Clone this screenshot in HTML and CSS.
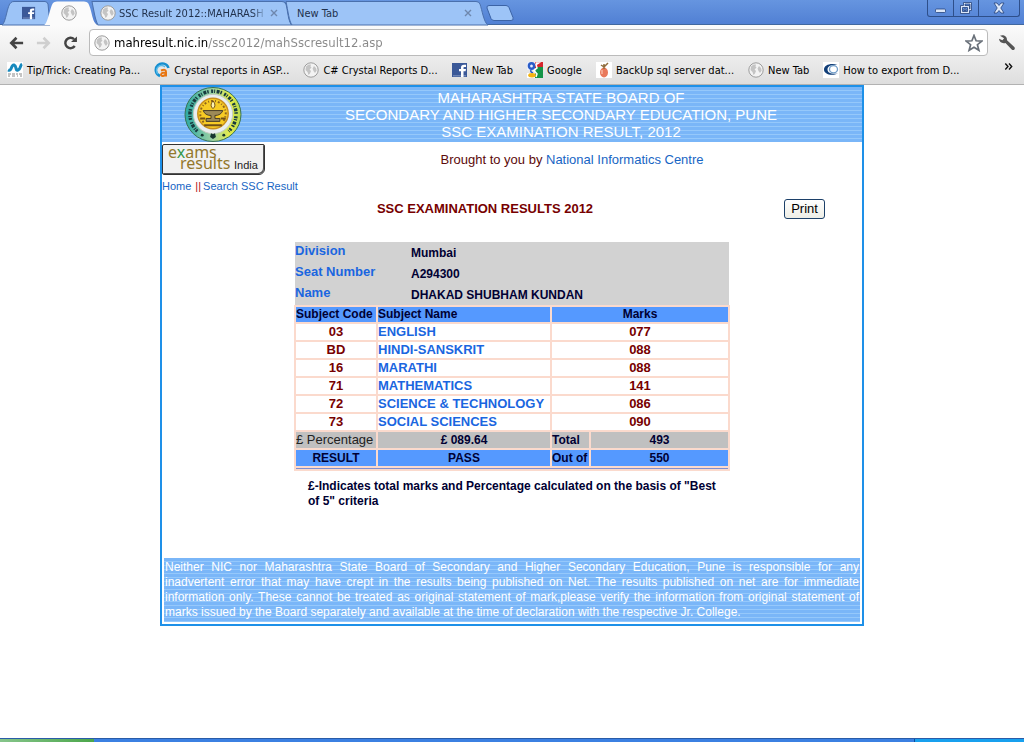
FILE: index.html
```html
<!DOCTYPE html>
<html lang="en">
<head>
<meta charset="utf-8">
<title>SSC Result 2012</title>
<link rel="stylesheet" href="styles.css">
</head>
<body>
<svg class="sprite" aria-hidden="true">
  <symbol id="globe" viewBox="0 0 16 16"><circle cx="8" cy="8" r="7.2" fill="#f3f3f3" stroke="#9c9c9c" stroke-width="1"/><path d="M3 4.500 5.500 2.500l2.500 0-.5 2 1 1L6.600 7.500 8 9l-1 2.500-1.500 1.500-1-3-2-2zM11 4l2 2 .7 2.500-1.700 2.400-1.500-2-.9-2.500z" fill="#c4c4c4"/></symbol>
  <symbol id="fb" viewBox="0 0 16 16"><path d="M0 1h15v14H0z" fill="#3b5998"/><path d="M1 13h13v1.5H1z" fill="#6d84b4"/><path d="M9 15V9.200H7V7h2V5.500C9 3.600 10 2.800 12 2.800h2V5h-1.300c-1 0-1.200.3-1.200 1V7H14l-.4 2.200h-2.100V15z" fill="#fff"/></symbol>
</svg>

<header class="browser">
  <div class="tabstrip">
    <div class="tabs">
      <button class="tab tab-pinned" type="button" aria-label="Facebook">
        <svg class="tab-shape" viewBox="0 0 48 24" preserveAspectRatio="none"><path d="M0 24C4 22 5 4 9 1.500Q10 .5 12 .5H43Q45 .5 46 3L48 24z"/></svg>
        <svg class="icon"><use href="#fb"/></svg>
      </button>
      <button class="tab tab-active" type="button" aria-label="Current page">
        <svg class="tab-shape" viewBox="0 0 54 24" preserveAspectRatio="none"><path d="M0 24C4 23 6 6 9 2Q10 .5 13 .5H40Q43 .5 44 2C48 8 48 23 54 24z"/></svg>
        <svg class="icon"><use href="#globe"/></svg>
      </button>
      <button class="tab tab-result" type="button">
        <svg class="tab-shape" viewBox="0 0 198 24" preserveAspectRatio="none"><path d="M6 24C3 20 2 10 0 .5H188Q191 .5 192 3C194 9 194 22 198 24z"/></svg>
        <svg class="icon"><use href="#globe"/></svg><span class="tab-label fade">SSC Result 2012::MAHARASH</span><svg class="close" viewBox="0 0 8 8"><path d="m1 1 6 6M7 1 1 7"/></svg>
      </button>
      <button class="tab tab-new" type="button">
        <svg class="tab-shape" viewBox="0 0 202 24" preserveAspectRatio="none"><path d="M6 24C3 20 2 10 0 .5H190Q193 .5 194 3C196 9 198 22 202 24z"/></svg>
        <span class="tab-label">New Tab</span><svg class="close" viewBox="0 0 8 8"><path d="m1 1 6 6M7 1 1 7"/></svg>
      </button>
      <button class="add-tab" type="button" aria-label="Open a new tab"><svg viewBox="0 0 28 16"><path d="M3 .5h17q2 0 3 2l4 10q1 3-2 3H8q-2 0-3-2L1 3Q.5.500 3 .5z"/></svg></button>
    </div>
    <div class="window-buttons">
      <button type="button" aria-label="Minimise"><svg viewBox="0 0 14 14"><rect x="1.500" y="8" width="10" height="3.500" rx="1"/></svg></button>
      <button type="button" aria-label="Restore"><svg viewBox="0 0 14 14"><path fill-rule="evenodd" d="M4.500 1.500h8v8h-2v3h-9v-8h3zM6 3v1.500h4.500V8H11V3zM3.500 6.500v4h5v-4zM5 8h2v1.500H5z"/></svg></button>
      <button class="window-close" type="button" aria-label="Close"><svg viewBox="0 0 14 14"><path d="M2 2h3l2 2.500L9 2h3L8.800 7l3.200 5H9L7 9.500 5 12H2l3.200-5z"/></svg></button>
    </div>
  </div>

  <div class="toolbar">
    <button type="button" aria-label="Back"><svg viewBox="0 0 18 18"><path d="M16 9H4M9 3.500 3.500 9 9 14.500" fill="none" stroke="#444" stroke-width="2.800"/></svg></button>
    <button type="button" aria-label="Forward"><svg viewBox="0 0 18 18"><path d="M2 9h12M9 3.500 14.500 9 9 14.500" fill="none" stroke="#cfcfcf" stroke-width="2.800"/></svg></button>
    <button type="button" aria-label="Reload"><svg viewBox="0 0 18 18"><path d="M13.500 12.200A5.500 5.500 0 1 1 12.800 5" fill="none" stroke="#444" stroke-width="2.600"/><path d="M15.800 2v6H9.500z" fill="#444"/></svg></button>
    <div class="omnibox">
      <svg class="icon"><use href="#globe"/></svg>
      <input class="url" type="text" aria-label="Address" value="mahresult.nic.in/ssc2012/mahSscresult12.asp">
      <button type="button" aria-label="Bookmark this page"><svg viewBox="0 0 18 18"><path d="m9 1.500 2.100 5.300 5.700.3-4.400 3.600 1.500 5.600L9 13.200l-4.900 3.100 1.500-5.600L1.200 7.100l5.700-.3z" fill="#fff" stroke="#697079" stroke-width="1.700"/></svg></button>
    </div>
    <button class="wrench" type="button" aria-label="Settings"><svg viewBox="0 0 18 18"><path d="M2 1.800C5 .3 9.300 2 9 6.300l7.300 6.600c1.600 2-.8 4.200-2.600 2.700L7.500 9C4 9.900 1.200 8 1 4.800l3.400 1.500 1.700-2z" fill="#555"/></svg></button>
  </div>

  <nav class="bookmarks">
    <a href="#"><svg class="icon" viewBox="0 0 16 16"><path d="M0 0h16v16H0z" fill="#fff"/><path d="M1 8c4 2 3-6 6-5s1 6 4 5 2-5 4-6" fill="none" stroke="#1689bd" stroke-width="3"/><path d="M1 12h3m1 0h3m1 0h2m1 0h3M1 14h2m2 0h3m2 0h1m2 0h2" stroke="#888"/></svg>Tip/Trick: Creating Pa...</a>
    <a href="#"><svg class="icon" viewBox="0 0 16 16"><path d="M6 14A6.500 6.500 0 1 1 14.500 6" fill="none" stroke="#168fd0" stroke-width="2.500"/><path d="M4 12a4.500 4.500 0 0 1 7-7" fill="none" stroke="#57b9e8" stroke-width="1.500"/><path d="M7 8.500q5-2 5 1.500v4.500M12 10.500c-6-.5-6 4-3 3.500q3-.5 3-3" fill="none" stroke="#e87510" stroke-width="2"/></svg>Crystal reports in ASP...</a>
    <a href="#"><svg class="icon"><use href="#globe"/></svg>C# Crystal Reports D...</a>
    <a href="#"><svg class="icon"><use href="#fb"/></svg>New Tab</a>
    <a href="#"><svg class="icon" viewBox="0 0 16 16"><path d="M0 0h8v8H0z" fill="#e9eefb"/><path d="M8 0h8v6H8z" fill="#d6252b"/><path d="M9 5h7v11H7z" fill="#149447"/><path d="M0 11h8v5H0z" fill="#fff"/><ellipse cx="4.500" cy="4" rx="2.600" ry="2.800" fill="none" stroke="#2a5cc8" stroke-width="2.400"/><path d="M8.500 1h3L9 2.500 10 6 7 8.500 10 12 9 15" fill="none" stroke="#fff" stroke-width="1.500"/><path d="M4 8q-1 2 2 3" fill="none" stroke="#2a5cc8" stroke-width="1.500"/><ellipse cx="5" cy="13.300" rx="3.800" ry="2.200" fill="#f4b414"/></svg>Google</a>
    <a href="#"><svg class="icon" viewBox="0 0 16 16"><path d="M0 0h16v16H0z" fill="#fff"/><ellipse cx="8" cy="10.500" rx="4" ry="5" fill="#e9795b"/><path d="M8 7V2m0 3 4-4M8 5 5 3" fill="none" stroke="#8f6b3b" stroke-width="1.500"/><path d="M6 8v4" stroke="#f6b7a0" stroke-width="1.500"/></svg>BackUp sql server dat...</a>
    <a href="#"><svg class="icon"><use href="#globe"/></svg>New Tab</a>
    <a href="#"><svg class="icon" viewBox="0 0 16 16"><path d="M0 0h16v16H0z" fill="#fff"/><path d="M14.500 3C8 .5 1 3 1 7.500S8 14.500 15 11.500C10 12.500 4.500 11.500 4.500 7.500S9 2.500 14.500 3z" fill="#123f78"/><ellipse cx="10.500" cy="7.300" rx="4" ry="3.600" fill="none" stroke="#6f9cc8" stroke-width="1.300"/></svg>How to export from D...</a>
    <button class="more" type="button" aria-label="More bookmarks"><svg viewBox="0 0 8 7"><path d="m.8.500 2.700 3-2.700 3m3.700-6 2.700 3-2.700 3" fill="none" stroke="#111" stroke-width="1.400"/></svg></button>
  </nav>
</header>

<main class="viewport">
  <div class="sheet">
    <div class="banner stripes">
      <svg class="seal" viewBox="0 0 58 56" role="img" aria-label="Board emblem">
        <defs><linearGradient id="ring"><stop offset="0" stop-color="#2ba8a4"/><stop offset=".5" stop-color="#9fd3a4"/><stop offset=".8" stop-color="#e6ec48"/><stop offset="1" stop-color="#b4d850"/></linearGradient></defs>
        <ellipse cx="29" cy="28" rx="28.500" ry="27.500" fill="url(#ring)" stroke="#38704f"/>
        <path d="M13 45A23.500 23.500 0 1 1 45 45" fill="none" stroke="#183b40" stroke-width="3.500" stroke-dasharray="2 1 1 1.500 3 1 1.500 2.500"/>
        <circle cx="29" cy="27.500" r="20" fill="#e9eef0" stroke="#c3cdc0"/>
        <circle cx="29" cy="27" r="15.500" fill="#f7cb24" stroke="#c98f1c" stroke-width="1.500"/>
        <path d="M19.500 36A13 13 0 1 1 38.500 36" fill="none" stroke="#8c631c" stroke-dasharray="2 2 1 2" stroke-width="2"/>
        <path d="M29 14q4 5 0 8-4-3 0-8z" fill="#fff3b0" stroke="#70501b"/>
        <path d="M19 24h20q-2 5-8 5v3h5v3H22v-3h5v-3q-6 0-8-5z" fill="#9c8a58" stroke="#443b28"/>
        <path d="M16 32h5m16 0h5M20 39h18" stroke="#705018" stroke-width="2"/>
        <path d="m26 51 1-4 2 1 2-1 1 4-3 2z" fill="#17352f"/><circle cx="18" cy="49" r="1.500" fill="#17352f"/><circle cx="40" cy="49" r="1.500" fill="#17352f"/>
      </svg>
      <h1>MAHARASHTRA STATE BOARD OF<br>SECONDARY AND HIGHER SECONDARY EDUCATION, PUNE<br>SSC EXAMINATION RESULT, 2012</h1>
    </div>
    <div class="credit">
      <a class="logo" href="#"><span class="logo-mark"><span class="logo-exams">e<i>x</i>ams</span><span class="logo-results">results</span></span><span class="logo-india">India</span></a>
      <p>Brought to you by <a href="#">National Informatics Centre</a></p>
    </div>
    <nav class="crumbs"><a href="#">Home</a><span>||</span><a href="#">Search SSC Result</a></nav>
    <div class="heading">
      <h2>SSC EXAMINATION RESULTS 2012</h2>
      <button class="print" type="button">Print</button>
    </div>

    <section class="result">
      <dl class="candidate">
        <dt>Division</dt><dd>Mumbai</dd>
        <dt>Seat Number</dt><dd>A294300</dd>
        <dt>Name</dt><dd>DHAKAD SHUBHAM KUNDAN</dd>
      </dl>
      <table class="marks">
        <colgroup><col class="col-code"><col class="col-subject"><col class="col-label"><col></colgroup>
        <thead><tr><th scope="col">Subject Code</th><th scope="col">Subject Name</th><th scope="col" class="center" colspan="2">Marks</th></tr></thead>
        <tbody>
          <tr><td>03</td><td class="subject">ENGLISH</td><td colspan="2">077</td></tr>
          <tr><td>BD</td><td class="subject">HINDI-SANSKRIT</td><td colspan="2">088</td></tr>
          <tr><td>16</td><td class="subject">MARATHI</td><td colspan="2">088</td></tr>
          <tr><td>71</td><td class="subject">MATHEMATICS</td><td colspan="2">141</td></tr>
          <tr><td>72</td><td class="subject">SCIENCE &amp; TECHNOLOGY</td><td colspan="2">086</td></tr>
          <tr><td>73</td><td class="subject">SOCIAL SCIENCES</td><td colspan="2">090</td></tr>
        </tbody>
        <tfoot>
          <tr class="total"><td class="percentage">£ Percentage</td><td>£ 089.64</td><td class="left">Total</td><td>493</td></tr>
          <tr class="outcome"><td>RESULT</td><td>PASS</td><td class="left">Out of</td><td>550</td></tr>
          <tr class="rule"><td colspan="4"></td></tr>
        </tfoot>
      </table>
      <p class="note">£-Indicates total marks and Percentage calculated on the basis of "Best of 5" criteria</p>
    </section>

    <footer class="disclaimer stripes">
      <span>Neither NIC nor Maharashtra State Board of Secondary and Higher Secondary Education, Pune is responsible for any</span>
      <span>inadvertent error that may have crept in the results being published on Net. The results published on net are for immediate</span>
      <span>information only. These cannot be treated as original statement of mark,please verify the information from original statement of</span>
      <span>marks issued by the Board separately and available at the time of declaration with the respective Jr. College.</span>
    </footer>
  </div>
</main>
<div class="taskbar"><span class="start"></span><span class="tasks"></span><span class="tray"></span></div>
</body>
</html>
```

FILE: styles.css
```css
* { box-sizing: border-box; }
body { margin: 0; min-height: 100vh; display: flex; flex-direction: column; background: #fff; font-family: "Liberation Sans", Arial, sans-serif; }
h1, h2, p, dl, dd { margin: 0; }
a { color: #1765c4; text-decoration: none; }
button { margin: 0; padding: 0; border: 0; background: none; font: inherit; }
svg { display: block; flex: none; }
.sprite { position: absolute; width: 0; height: 0; }
.icon { width: 16px; height: 16px; }

/* Browser chrome */
.browser { font-family: "DejaVu Sans Condensed", "Noto Sans", sans-serif; font-size: 11px; color: #000; }
.tabstrip { display: flex; justify-content: space-between; height: 25px; background: linear-gradient(#6695e0, #5180d4); border-bottom: 1px solid #41689f; }
.tabs { display: flex; padding: 1px 0 0 2px; height: 25px; }
.tab { position: relative; isolation: isolate; display: flex; align-items: center; height: 24px; margin-right: -6px; color: #22324d; }
.tab-shape { position: absolute; inset: 0; width: 100%; height: 100%; z-index: -1; fill: #9dc4f7; stroke: #4a70ad; overflow: visible; }
.tab-pinned { width: 48px; padding-left: 20px; }
.tab-pinned .icon { width: 14px; height: 14px; }
.tab-active { width: 54px; padding-left: 17px; z-index: 1; }
.tab-active .tab-shape { fill: #fbfbfb; stroke: none; }
.tab-result { width: 200px; padding: 0 14px 0 8px; gap: 3px; }
.tab-new { width: 202px; padding: 0 16px 0 11px; }
.tab-label { flex: 1; min-width: 0; overflow: hidden; white-space: nowrap; text-align: left; }
.fade { mask-image: linear-gradient(to right, #000 90%, transparent); }
.close { width: 8px; height: 8px; fill: none; stroke: #6e87ad; stroke-width: 1.4; }
.add-tab { margin-left: 4px; align-self: center; }
.add-tab svg { width: 28px; height: 16px; fill: #9dc4f7; stroke: #3b63a6; }
.window-buttons { display: flex; align-self: flex-start; margin-right: 4px; height: 17px; border: 1px solid #2e4f8a; border-top: 0; border-radius: 0 0 3px 3px; }
.window-buttons button { width: 25px; display: flex; align-items: center; justify-content: center; border-left: 1px solid #2e4f8a; }
.window-buttons button:first-child { border-left: 0; }
.window-buttons .window-close { width: 41px; }
.window-buttons svg { width: 14px; height: 14px; fill: #dce7f8; stroke: #24437b; stroke-width: .8; }
.toolbar { display: flex; align-items: center; height: 33px; padding: 2px 8px 0; gap: 10px; background: linear-gradient(#fbfbfb, #ececec); }
.toolbar > button svg { width: 18px; height: 18px; }
.toolbar > button:nth-child(-n+3) svg { width: 17px; }
.omnibox { flex: 1; display: flex; align-items: center; height: 27px; padding: 0 4px; gap: 4px; background: #fff; border: 1px solid #bbb; border-radius: 4px; }
.omnibox button svg { width: 18px; height: 18px; }
.url { flex: 1; min-width: 0; padding: 0; border: 0; outline: 0; font: 13px "DejaVu Sans Condensed", "Noto Sans", sans-serif; color: transparent; background: linear-gradient(to right, #000 94px, #888 94px); background-clip: text; -webkit-background-clip: text; }
.bookmarks { display: flex; align-items: center; height: 27px; padding: 0 11px 2px 7px; gap: 14px; background: linear-gradient(#ececec, #dedede); border-bottom: 1px solid #b2b2b2; }
.bookmarks a { display: flex; align-items: center; gap: 4px; color: #000; white-space: nowrap; }
.more { margin-left: auto; padding-bottom: 8px; }
.more svg { width: 9px; height: 7px; }

/* Result page */
.viewport { flex: 1; }
.sheet { max-width: 704px; margin: 0 auto; border: 2px solid #1e90e8; }
.stripes { background: repeating-linear-gradient(#7ab6f8 0 3px, #95c8fb 3px 4px); color: #fff; }
.banner { display: grid; grid-template-columns: 102px 1fr; align-items: center; height: 55px; }
.seal { width: 58px; height: 55px; justify-self: center; }
.banner h1 { padding-right: 4px; font: 15px/17px "Liberation Sans", Arial, sans-serif; text-align: center; }
.credit { display: grid; grid-template-columns: 104px 1fr; align-items: center; padding-top: 2px; }
.credit p { padding: 0 80px 0 96px; text-align: center; font-size: 13px; line-height: 16px; color: #5c0a0a; }
.logo { display: flex; align-items: flex-end; width: 103px; height: 31px; padding: 0 0 0 5px; border: 1px solid #333; border-radius: 2px 2px 6px 2px; box-shadow: inset -1px -1px #555; background: #f1f1f1; }
.logo-mark { display: flex; flex-direction: column; width: 62px; height: 30px; font: 16px/16px "Noto Sans", sans-serif; color: #94782c; }
.logo-mark i { color: #36984b; font-style: normal; }
.logo-results { margin-top: -5px; padding-left: 12px; }
.logo-india { padding: 0 0 1px 4px; font-size: 11px; line-height: 15px; color: #222; }
.crumbs { display: flex; padding-top: 4px; font-size: 11px; line-height: 15px; }
.crumbs span { padding: 0 2px 0 4px; color: #b31217; }
.heading { display: grid; grid-template-columns: 1fr auto; align-items: center; padding: 5px 37px 0 0; }
.heading h2 { padding-left: 24px; text-align: center; font-size: 13px; line-height: 16px; color: #700; }
.print { width: 41px; height: 20px; border: 1px solid #1c4069; border-radius: 3px; background: linear-gradient(#fff, #eeeee6); font-size: 13px; line-height: 16px; color: #000; }
.result { width: 436px; max-width: 100%; margin: 23px auto 0; font-size: 12px; font-weight: bold; color: #003; }
.candidate { display: grid; grid-template-columns: 116px 1fr; grid-auto-rows: 21px; margin: 0 1px; background: #d2d2d2; }
.candidate dt { font-size: 13px; line-height: 18px; color: #1a66e0; }
.candidate dd { line-height: 22px; }
.marks { width: 100%; table-layout: fixed; border-collapse: separate; border-spacing: 2px; background: #fbdacd; }
.col-code { width: 80px; }
.col-subject { width: 172px; }
.col-label { width: 37px; }
.marks th, .marks td { padding: 0; height: 16px; line-height: 16px; white-space: nowrap; text-align: center; }
.marks th { height: 15px; line-height: 15px; background: #59f; text-align: left; }
.marks .center { text-align: center; }
.marks tbody td { background: #fff; font-size: 13px; color: #700; }
.marks tbody .subject { text-align: left; color: #1a66e0; }
.marks .left { text-align: left; }
.marks .total td { background: #c0c0c0; }
.marks .total .percentage { font-size: 13px; font-weight: normal; color: #222; text-align: left; }
.marks .outcome td { background: #59f; }
.marks .rule td { height: 1px; line-height: 1px; background: #7f8fd0; }
.note { padding: 8px 14px 0; line-height: 15px; }
.disclaimer { margin: 49px 2px 2px; padding: 2px 1px; font-size: 12px; line-height: 15px; text-align: justify; }
.disclaimer span { display: block; text-align-last: justify; }
.disclaimer span:last-child { text-align-last: left; }

/* Desktop taskbar */
.taskbar { display: flex; height: 4px; border-top: 1px solid #2a5ca8; }
.start { width: 94px; background: linear-gradient(to right, #86c58b, #4ba64a); }
.tasks { flex: 1; background: #3b80e2; }
.tray { width: 110px; border-left: 1px solid #0b4c9c; background: #18a0ee; }
```
